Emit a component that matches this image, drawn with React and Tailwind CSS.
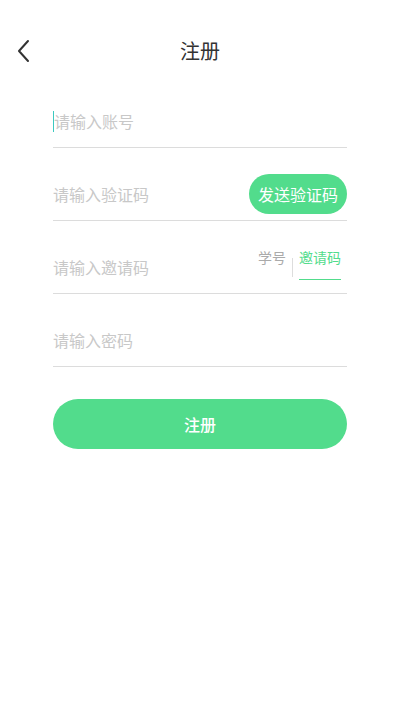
import React, { useState } from "react";

const font = { fontFamily: '"Noto Sans CJK SC", "Noto Sans", sans-serif' };

const Register = () => {
  const [tab, setTab] = useState("invite");

  return (
    <div className="bg-white min-h-screen w-[400px]" style={font}>
      <div className="relative flex items-center justify-center pt-[27px] h-[75px]">
        <button className="absolute left-[14px] top-[38px] p-0">
          <svg width="18" height="26" viewBox="0 0 18 26" fill="none">
            <path d="M14 3 L5 13 L14 23" stroke="#333" strokeWidth="2" strokeLinecap="round" strokeLinejoin="round" />
          </svg>
        </button>
        <h1 className="text-[20px] text-[#333] leading-none">注册</h1>
      </div>

      <form className="px-[53px]">
        <div className="flex items-center h-[73px] pt-[20px] border-b border-[#dcdcdc]">
          <span className="w-px h-[21px] bg-[#3cc9c0]"></span>
          <input
            type="text"
            placeholder="请输入账号"
            className="flex-1 text-[16px] outline-none placeholder:text-[#c8c8c8] bg-transparent"
          />
        </div>

        <div className="flex items-center h-[73px] pt-[20px] border-b border-[#dcdcdc]">
          <input
            type="text"
            placeholder="请输入验证码"
            className="flex-1 min-w-0 text-[16px] outline-none placeholder:text-[#c8c8c8] bg-transparent"
          />
          <button type="button" className="h-[40px] px-[9px] rounded-full bg-[#52dc8c] text-white text-[16px] leading-none">
            发送验证码
          </button>
        </div>

        <div className="flex items-center h-[73px] pt-[20px] border-b border-[#dcdcdc]">
          <input
            type="text"
            placeholder="请输入邀请码"
            className="flex-1 min-w-0 text-[16px] outline-none placeholder:text-[#c8c8c8] bg-transparent"
          />
          <div className="flex items-start self-start mt-[2px] pr-[6px]">
            <button
              type="button"
              onClick={() => setTab("student")}
              className={tab === "student" ? "text-[14px] text-[#52dc8c] leading-[28px] border-b border-[#52dc8c] pb-[8px]" : "text-[14px] text-[#aaa] leading-[28px]"}
            >
              学号
            </button>
            <span className="w-px h-[19px] bg-[#ddd] mx-[6px] mt-[15px]"></span>
            <button
              type="button"
              onClick={() => setTab("invite")}
              className={tab === "invite" ? "text-[14px] text-[#52dc8c] leading-[28px] border-b border-[#52dc8c] pb-[8px]" : "text-[14px] text-[#aaa] leading-[28px]"}
            >
              邀请码
            </button>
          </div>
        </div>

        <div className="flex items-center h-[73px] pt-[20px] border-b border-[#dcdcdc]">
          <input
            type="password"
            placeholder="请输入密码"
            className="flex-1 text-[16px] outline-none placeholder:text-[#c8c8c8] bg-transparent"
          />
        </div>

        <button type="button" className="mt-[32px] w-full h-[50px] rounded-full bg-[#52dc8c] text-white text-[16px] font-medium">
          注册
        </button>
      </form>
    </div>
  );
};

export default function App() {
  return <Register />;
}
